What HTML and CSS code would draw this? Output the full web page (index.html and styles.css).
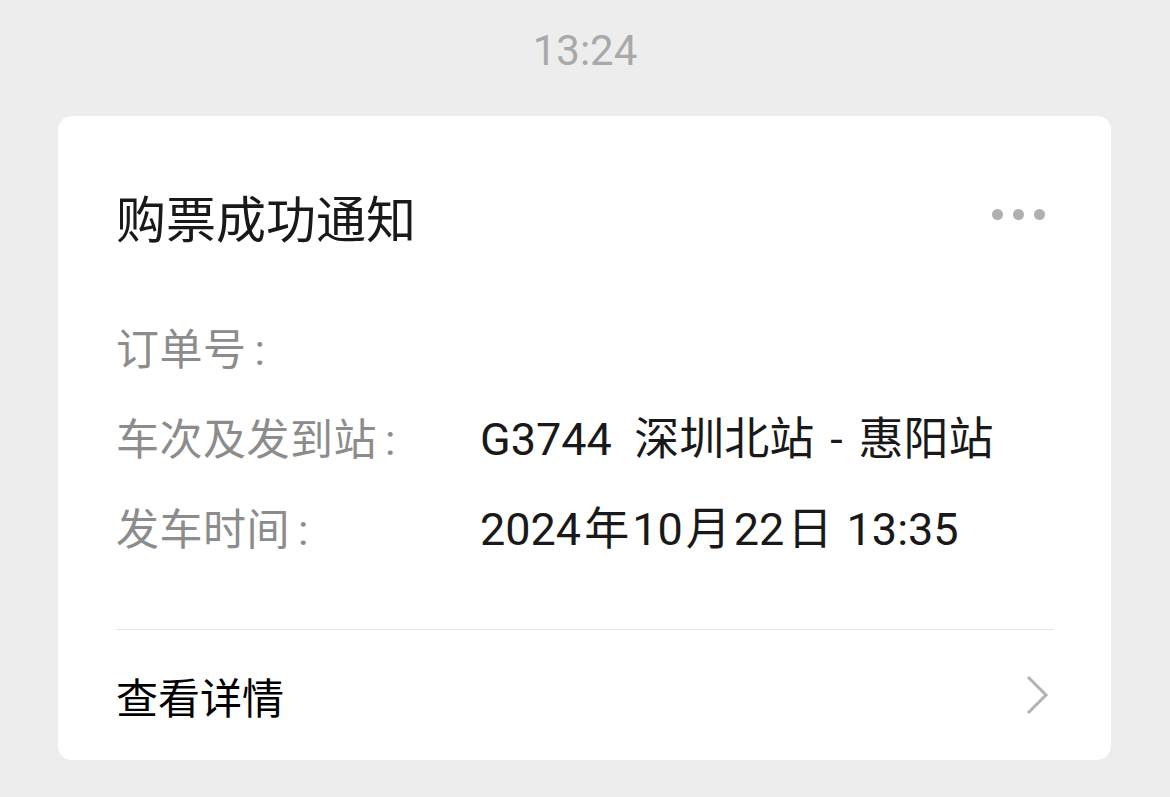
FILE: index.html
```html
<!DOCTYPE html>
<html lang="zh-CN">
<head>
    <meta charset="UTF-8">
    <meta name="viewport" content="width=device-width, initial-scale=1.0">
    <title>购票成功通知</title>
    <link rel="stylesheet" href="styles.css">
</head>
<body>

    <div class="time">13:24</div>

    <div class="card">
        <div class="card-head">
            <h1>购票成功通知</h1>
            <div class="more">
                <span></span><span></span><span></span>
            </div>
        </div>

        <div class="rows">
            <div class="row">
                <div class="label">订单号<span class="colon">:</span></div>
                <div class="value"></div>
            </div>
            <div class="row">
                <div class="label">车次及发到站<span class="colon">:</span></div>
                <div class="value">G3744&nbsp;&nbsp;深圳北站<span class="sep">-</span>惠阳站</div>
            </div>
            <div class="row">
                <div class="label">发车时间<span class="colon">:</span></div>
                <div class="value">2024<span class="unit">年</span>10<span class="unit">月</span>22<span class="unit">日</span> 13:35</div>
            </div>
        </div>

        <div class="card-foot">
            <span>查看详情</span>
            <svg class="chevron" width="24" height="40" viewBox="0 0 24 40">
                <path d="M3 2 L21 20 L3 38" fill="none" stroke="#b3b3b3" stroke-width="3"/>
            </svg>
        </div>
    </div>

</body>
</html>
```

FILE: styles.css
```css
body {
    margin: 0;
    font-family: Roboto, 'Noto Sans CJK SC', sans-serif;
    background-color: #ededed;
    color: #191919;
}

.time {
    height: 116px;
    display: flex;
    justify-content: center;
    align-items: center;
    padding-bottom: 16px;
    box-sizing: border-box;
    font-size: 42px;
    color: #a9a9a9;
}

.card {
    background-color: #fff;
    margin: 0 59px 0 58px;
    border-radius: 14px;
    padding: 0 57px 0 58px;
}

.card-head {
    display: flex;
    justify-content: space-between;
    align-items: center;
    padding-top: 70px;
}

h1 {
    margin: 0;
    font-size: 50px;
    font-weight: 400;
    line-height: 70px;
    color: #191919;
}

.more {
    display: flex;
    gap: 10px;
    margin-right: 9px;
    margin-top: -14px;
}

.more span {
    width: 11px;
    height: 11px;
    border-radius: 50%;
    background-color: #b0b0b0;
}

.rows {
    padding-top: 49px;
    padding-bottom: 54px;
    border-bottom: 1px solid #e5e5e5;
}

.row {
    display: flex;
    align-items: baseline;
    height: 90px;
    line-height: 90px;
}

.label {
    width: 364px;
    flex-shrink: 0;
    font-size: 43px;
    letter-spacing: 0.5px;
    color: #8c8c8c;
}

.colon {
    margin-left: 8px;
}

.value {
    font-size: 45px;
    color: #191919;
}

.sep {
    margin: 0 16px;
}

.unit {
    margin: 0 3px;
}

.card-foot {
    height: 130px;
    display: flex;
    justify-content: space-between;
    align-items: center;
    font-size: 42px;
    color: #000;
}

.chevron {
    margin-right: 5px;
}
```
